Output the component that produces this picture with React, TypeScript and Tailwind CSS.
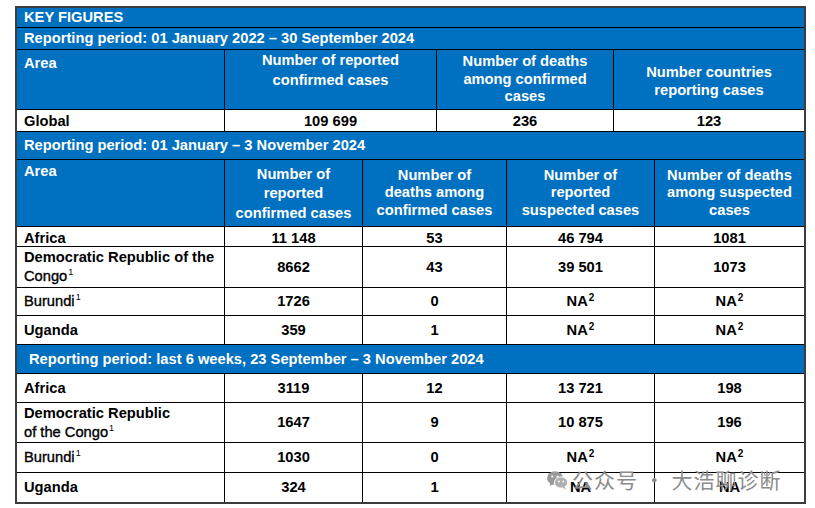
import React from "react"

const font = { fontFamily: '"Liberation Sans", Arial, sans-serif' }

// lighter-bold weight used in the source for some area names
const semi = "font-normal [-webkit-text-stroke:0.35px_black]"

function Sup({ n }: { n: string }) {
  return <sup className="text-[9px] font-normal !-top-[6px] ml-[1px]">{n}</sup>
}

function NA({ sup = true }: { sup?: boolean }) {
  return (
    <span>
      NA{sup && <sup className="text-[10px] font-bold ml-[1px]">2</sup>}
    </span>
  )
}

type Row = { area: React.ReactNode; vals: React.ReactNode[]; h: string }

const period2: Row[] = [
  { area: "Africa", vals: ["11 148", "53", "46 794", "1081"], h: "h-[20px]" },
  {
    area: (
      <>
        Democratic Republic of the
        <br />
        <span className={semi}>Congo</span>
        <Sup n="1" />
      </>
    ),
    vals: ["8662", "43", "39 501", "1073"],
    h: "h-[41px]",
  },
  {
    area: (
      <>
        <span className={semi}>Burundi</span>
        <Sup n="1" />
      </>
    ),
    vals: ["1726", "0", <NA key="a" />, <NA key="b" />],
    h: "h-[28px]",
  },
  { area: "Uganda", vals: ["359", "1", <NA key="a" />, <NA key="b" />], h: "h-[29px]" },
]

const period3: Row[] = [
  { area: "Africa", vals: ["3119", "12", "13 721", "198"], h: "h-[29px]" },
  {
    area: (
      <>
        Democratic Republic
        <br />
        <span className={semi}>of the Congo</span>
        <Sup n="1" />
      </>
    ),
    vals: ["1647", "9", "10 875", "196"],
    h: "h-[40px]",
  },
  {
    area: (
      <>
        <span className={semi}>Burundi</span>
        <Sup n="1" />
      </>
    ),
    vals: ["1030", "0", <NA key="a" />, <NA key="b" />],
    h: "h-[30px]",
  },
  { area: "Uganda", vals: ["324", "1", <NA key="a" sup={false} />, <NA key="b" sup={false} />], h: "h-[29px]" },
]

const grid2 = "grid grid-cols-[208px_138px_144px_148px_1fr]"

function DataRows({ rows, last }: { rows: Row[]; last?: boolean }) {
  return (
    <>
      {rows.map((r, i) => (
        <div
          key={i}
          className={`${grid2} ${r.h} ${last && i === rows.length - 1 ? "" : "border-b border-black"} bg-white text-black`}
        >
          <div className="flex items-center pl-[7px] leading-[19px] border-r border-black">
            <div>{r.area}</div>
          </div>
          {r.vals.map((v, j) => (
            <div
              key={j}
              className={`flex items-center justify-center ${j < r.vals.length - 1 ? "border-r border-black" : ""}`}
            >
              {v}
            </div>
          ))}
        </div>
      ))}
    </>
  )
}

function WeChatIcon() {
  return (
    <svg width="21" height="20" viewBox="0 0 21 20">
      <ellipse cx="8" cy="8" rx="8" ry="6.8" fill="#9a9a9a" />
      <path d="M3.5 12.5 L2.5 16 L6.5 14 Z" fill="#9a9a9a" />
      <ellipse cx="14" cy="12.5" rx="6.6" ry="5.6" fill="#b0b0b0" stroke="#fff" strokeWidth="1" />
      <path d="M17.5 16.5 L19 19.5 L15.5 17.8 Z" fill="#b0b0b0" />
      <circle cx="5.3" cy="6.5" r="1.1" fill="#fff" />
      <circle cx="10.5" cy="6.5" r="1.1" fill="#fff" />
      <circle cx="12" cy="11.5" r="0.9" fill="#fff" />
      <circle cx="16.3" cy="11.5" r="0.9" fill="#fff" />
    </svg>
  )
}

export default function App() {
  return (
    <div className="w-[815px] h-[508px] bg-white relative overflow-hidden" style={font}>
      <div className="absolute left-[15px] top-[6px] w-[791px] border-2 border-[#3c3c3c] text-[14.7px] font-bold">
        {/* title */}
        <div className="h-[20px] bg-[#0070c0] text-white flex items-center pl-[7px] border-b border-black">
          KEY FIGURES
        </div>
        <div className="h-[22px] bg-[#0070c0] text-white flex items-center pl-[7px] border-b border-black">
          Reporting period: 01 January 2022 – 30 September 2024
        </div>

        {/* header 1 */}
        <div className="grid grid-cols-[208px_212px_177px_1fr] h-[60px] bg-[#0070c0] text-white border-b border-black">
          <div className="pl-[7px] pt-[2px] border-r border-black">Area</div>
          <div className="text-center leading-[20px] border-r border-black">
            Number of reported
            <br />
            confirmed cases
          </div>
          <div className="flex items-center justify-center text-center leading-[17.5px] border-r border-black">
            <div>
              Number of deaths
              <br />
              among confirmed
              <br />
              cases
            </div>
          </div>
          <div className="flex items-center justify-center text-center leading-[18px] pt-[2px]">
            <div>
              Number countries
              <br />
              reporting cases
            </div>
          </div>
        </div>
        <div className="grid grid-cols-[208px_212px_177px_1fr] h-[22px] bg-white text-black border-b border-black">
          <div className="flex items-center pl-[7px] border-r border-black">Global</div>
          <div className="flex items-center justify-center border-r border-black">109 699</div>
          <div className="flex items-center justify-center border-r border-black">236</div>
          <div className="flex items-center justify-center">123</div>
        </div>

        {/* period 2 */}
        <div className="h-[28px] bg-[#0070c0] text-white flex items-center pl-[7px] border-b border-black">
          Reporting period: 01 January – 3 November 2024
        </div>
        <div className={`${grid2} h-[67px] bg-[#0070c0] text-white border-b border-black`}>
          <div className="pl-[7px] border-r border-black">Area</div>
          <div className="flex items-center justify-center text-center leading-[19.5px] pt-[2px] border-r border-black">
            <div>
              Number of
              <br />
              reported
              <br />
              confirmed cases
            </div>
          </div>
          <div className="flex items-center justify-center text-center leading-[17.5px] border-r border-black">
            <div>
              Number of
              <br />
              deaths among
              <br />
              confirmed cases
            </div>
          </div>
          <div className="flex items-center justify-center text-center leading-[17.5px] border-r border-black">
            <div>
              Number of
              <br />
              reported
              <br />
              suspected cases
            </div>
          </div>
          <div className="flex items-center justify-center text-center leading-[17.5px]">
            <div>
              Number of deaths
              <br />
              among suspected
              <br />
              cases
            </div>
          </div>
        </div>
        <DataRows rows={period2} />

        {/* period 3 */}
        <div className="h-[29px] bg-[#0070c0] text-white flex items-center pl-[12px] border-b border-black">
          Reporting period: last 6 weeks, 23 September – 3 November 2024
        </div>
        <DataRows rows={period3} last />
      </div>

      {/* watermark */}
      <div className="absolute left-[547px] top-[464px] flex items-center gap-[4px] text-[#8c8c8c]">
        <WeChatIcon />
        <span
          className="text-[21px] font-normal tracking-[1px]"
          style={{ fontFamily: '"Noto Sans CJK SC", "Noto Sans", sans-serif' }}
        >
          公众号 · 大浩聊诊断
        </span>
      </div>
    </div>
  )
}
